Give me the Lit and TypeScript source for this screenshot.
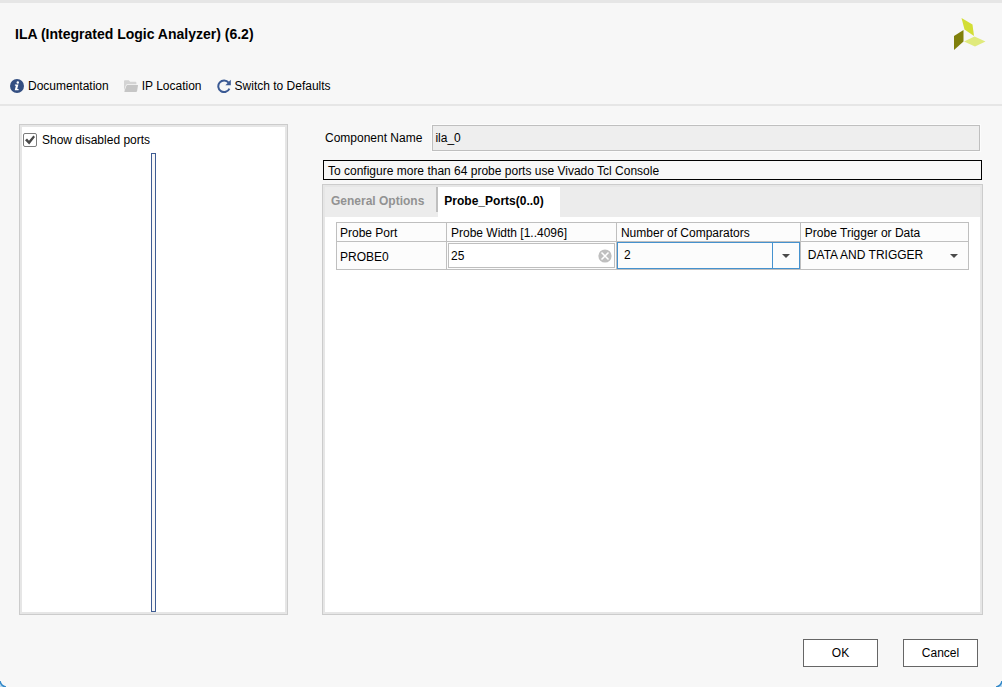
import { LitElement, html, css, svg } from "lit";
import { customElement, property, state } from "lit/decorators.js";
import { classMap } from "lit/directives/class-map.js";

const infoIcon = svg`<svg class="icon" viewBox="0 0 14 14" aria-hidden="true">
  <circle cx="7" cy="7" r="7" fill="#344f82"/>
  <circle cx="7.8" cy="3.5" r="1.2" fill="#fff"/>
  <path d="M4.9 5.5h3.5L7.200 10h1.400v1.200H4.700l1.200-4.500h-1z" fill="#fff"/>
</svg>`;

const folderIcon = svg`<svg class="icon" viewBox="0 0 14 14" aria-hidden="true">
  <path d="M0 11.5V2.2C0 1.5.4 1.2 1 1.2h3.8l1.4 1.6h5.3c.6 0 .9.3.9.9v1.5H3.4c-.7 0-1.1.3-1.4.9z" fill="#d4d4d4"/>
  <path d="M3.5 6h10.1c.4 0 .5.2.4.6l-.9 5.400c-.1.6-.5.9-1.1.9H.8c-.4 0-.6-.3-.4-.7l2-5.5c.2-.5.5-.7 1.1-.7z" fill="#c6c6c6"/>
</svg>`;

const resetIcon = svg`<svg class="icon" viewBox="0 0 14 14" aria-hidden="true">
  <path d="M11.6 3.6A5.8 5.8 0 1 0 12.4 9.6" fill="none" stroke="#3b5a94" stroke-width="2"/>
  <path d="M13.8.8v5.4H8.4z" fill="#3b5a94"/>
</svg>`;

const brandMark = svg`<svg class="brand" viewBox="0 0 32 32" role="img" aria-label="Xilinx">
  <path d="M7.500 0L18.500 6.500L20 18L10.500 11.500z" fill="#d3de36"/>
  <path d="M0 18L9.500 12V23.500L0 32z" fill="#80800c"/>
  <path d="M10 23.500L20.500 18.500L31.500 23.500L21 28.500z" fill="#e0ea7c"/>
</svg>`;

const clearIcon = svg`<svg viewBox="0 0 14 14" width="14" height="14" aria-hidden="true">
  <circle cx="7" cy="7" r="6.600" fill="#bfbfbf"/>
  <path d="M3.500 3.500l7 7M10.500 3.500l-7 7" stroke="#fff" stroke-width="1.500"/>
</svg>`;

@customElement("combo-box")
export class ComboBox extends LitElement {
  @property() label = "";
  @property({ type: Array }) options: string[] = [];
  @property({ type: Boolean }) active = false;

  static styles = css`
    :host { display: block; }
    .box {
      display: grid; grid-template-columns: 1fr 27px; height: 27px; box-sizing: border-box;
      border: 1px solid transparent; background: #fcfcfc;
    }
    select {
      grid-area: 1 / 1 / 2 / 3; appearance: none; width: 100%; border: 0; margin: 0;
      padding: 0 28px 1px 6px; background: transparent; color: #000; outline: none; border-radius: 0;
      font: 12px/16px "Liberation Sans", Arial, sans-serif;
    }
    .arrow {
      grid-area: 1 / 2; display: flex; align-items: center; justify-content: center;
      border-left: 1px solid transparent; pointer-events: none;
    }
    .active { position: relative; border-color: #4592cf; }
    .active .arrow { border-color: #4592cf; }
  `;

  render() {
    return html`<div class=${classMap({ box: true, active: this.active })}>
      <select aria-label=${this.label}>
        ${this.options.map((o) => html`<option>${o}</option>`)}
      </select>
      <span class="arrow"><svg width="8" height="4" viewBox="0 0 8 4"><path d="M0 0h8L4 4z" fill="#4a4a4a"/></svg></span>
    </div>`;
  }
}

@customElement("app-root")
export class AppRoot extends LitElement {
  @state() private tab = 1;
  @state() private showDisabled = true;

  static styles = css`
    :host {
      display: block; background: #f7f7f7; color: #000;
      font: 12px/16px "Liberation Sans", Arial, sans-serif;
    }
    * { box-sizing: border-box; }
    button, input { font: inherit; color: inherit; margin: 0; border-radius: 0; }
    .dialog {
      position: relative; overflow: hidden; min-height: 100vh; display: flex; flex-direction: column;
      border-top: 3px solid #e6e6e6;
    }
    .corner { position: absolute; bottom: 0; width: 6px; height: 6px; }
    .corner.left { left: 0; }
    .corner.right { right: 0; }
    .top { display: flex; justify-content: space-between; padding: 15px 16px 0 15px; height: 66px; }
    h1 { margin: 8px 0 0; font-size: 14px; line-height: 16px; font-weight: bold; }
    .brand { width: 32px; height: 32px; }
    .tools { display: flex; gap: 15px; padding: 9px 10px 10px; border-bottom: 2px solid #e6e6e6; }
    .tools button { display: flex; align-items: center; gap: 4px; height: 16px; padding: 0; border: 0; background: none; white-space: nowrap; }
    .icon { width: 14px; height: 14px; flex: none; }
    .main {
      flex: 1; display: grid; grid-template-columns: minmax(0, 269fr) minmax(0, 661fr);
      gap: 34px; padding: 18px 19px 24px;
    }
    .panel { border: 1px solid #ccc; background: #fff; display: flex; flex-direction: column; }
    .inner { border: 2px solid #e6e6e6; flex: 1; display: flex; flex-direction: column; }
    .check { display: flex; align-items: center; gap: 5px; padding: 5px 0 5px 1px; }
    .check input {
      appearance: none; width: 14px; height: 14px; border: 1px solid #7c7c7c; border-radius: 2px;
      background: #fff; display: grid; place-items: center;
    }
    .check input:checked::before {
      content: ""; width: 10px; height: 10px; background: #484848;
      clip-path: polygon(0 52%, 20% 36%, 40% 58%, 84% 4%, 100% 20%, 42% 94%);
    }
    .symbol { flex: 1; width: 5px; margin: 0 auto; border: 1px solid #3f5c93; background: #f7f7f7; }
    .config { display: flex; flex-direction: column; }
    .name { display: flex; align-items: center; gap: 10px; padding: 1px 3px 0; }
    .name input { flex: 1; min-width: 0; height: 26px; padding: 0 2px; border: 1px solid #bfbfbf; background: #eee; outline: 1px solid #fcfcfc; }
    .note { margin: 9px 1px 4px; border: 1px solid #000; height: 20px; padding: 2px 4px 0; line-height: 17px; }
    .config .panel { flex: 1; }
    .tabs { display: flex; background: #ececec; height: 30px; }
    .tabs button { border: 0; background: none; padding: 0 16px 3px 6px; font-weight: bold; color: #929292; white-space: nowrap; }
    .tabs .first { border-right: 2px solid #bfbfbf; height: 25px; padding: 3px 12px 0 6px; }
    .tabs .on { background: #fff; color: #000; }
    .content { padding: 5px 11px; }
    table { width: 100%; border-collapse: collapse; table-layout: fixed; background: #fcfcfc; }
    th, td { border: 1px solid #bfbfbf; text-align: left; font-weight: normal; padding: 0; }
    th { height: 19px; padding: 2px 4px 0; line-height: 16px; white-space: nowrap; }
    th:first-child, td:first-child { padding: 2px 3px 0; }
    .c1 { width: 17.4%; }
    .c2 { width: 26.9%; }
    .c3 { width: 29.1%; }
    .width { display: flex; align-items: center; margin: 1px; height: 25px; border: 1px solid #bfbfbf; background: #fff; padding: 0 2px; }
    .width input { flex: 1; min-width: 0; border: 0; padding: 0; background: none; outline: none; }
    .width button { border: 0; padding: 0; background: none; display: flex; }
    footer { display: flex; justify-content: flex-end; gap: 25px; padding: 0 24px 20px; }
    footer button { width: 75px; height: 28px; border: 1px solid #666; background: #fff; padding: 0; }
  `;

  render() {
    return html`<div class="dialog">
      <header>
        <div class="top"><h1>ILA (Integrated Logic Analyzer) (6.2)</h1>${brandMark}</div>
        <nav class="tools">
          <button>${infoIcon}Documentation</button>
          <button>${folderIcon}IP Location</button>
          <button>${resetIcon}Switch to Defaults</button>
        </nav>
      </header>
      <div class="main">
        <section class="panel"><div class="inner">
          <label class="check"><input type="checkbox" .checked=${this.showDisabled}
            @change=${() => (this.showDisabled = !this.showDisabled)}>Show disabled ports</label>
          <div class="symbol"></div>
        </div></section>
        <section class="config">
          <div class="name"><label for="name">Component Name</label><input id="name" value="ila_0" readonly></div>
          <div class="note">To configure more than 64 probe ports use Vivado Tcl Console</div>
          <div class="panel"><div class="inner">
            <div class="tabs" role="tablist">
              ${["General Options", "Probe_Ports(0..0)"].map((t, i) => html`<button role="tab"
                aria-selected=${this.tab === i} class=${classMap({ first: i === 0, on: this.tab === i })}
                @click=${() => (this.tab = i)}>${t}</button>`)}
            </div>
            <div class="content">
              <table>
                <colgroup><col class="c1"><col class="c2"><col class="c3"><col></colgroup>
                <thead><tr><th>Probe Port</th><th>Probe Width [1..4096]</th><th>Number of Comparators</th><th>Probe Trigger or Data</th></tr></thead>
                <tbody><tr>
                  <td>PROBE0</td>
                  <td><div class="width"><input aria-label="Probe Width" value="25"><button aria-label="Clear">${clearIcon}</button></div></td>
                  <td><combo-box active label="Number of Comparators" .options=${["2", "1", "3", "4"]}></combo-box></td>
                  <td><combo-box label="Probe Trigger or Data" .options=${["DATA AND TRIGGER", "DATA", "TRIGGER"]}></combo-box></td>
                </tr></tbody>
              </table>
            </div>
          </div></div>
        </section>
      </div>
      <footer><button>OK</button><button>Cancel</button></footer>
      <svg class="corner left" viewBox="0 0 6 6"><path d="M0 0Q1 5 6 6H0z" fill="#b8d8ef"/><path d="M0 0Q1 5 6 6" fill="none" stroke="#3087c8" stroke-width="1.500"/></svg>
      <svg class="corner right" viewBox="0 0 6 6"><path d="M6 0Q5 5 0 6H6z" fill="#b8d8ef"/><path d="M6 0Q5 5 0 6" fill="none" stroke="#3087c8" stroke-width="1.500"/></svg>
    </div>`;
  }
}
